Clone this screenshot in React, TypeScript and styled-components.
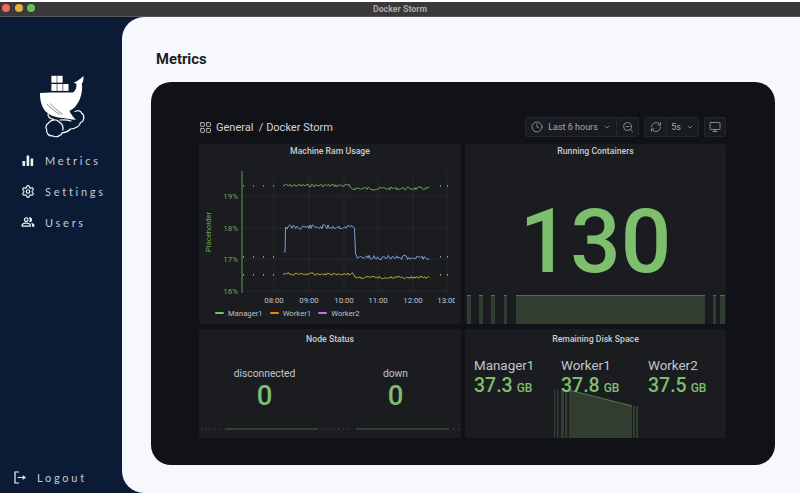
import React from 'react'
import styled, { createGlobalStyle } from 'styled-components'
import { ChevronDown, Clock, LayoutGrid, Monitor, RefreshCw, Settings, ZoomOut } from 'lucide-react'
import { MdOutlinePeopleAlt } from 'react-icons/md'

const GREEN = '#7dbf6d'
const AXIS_GREEN = '#6aa860'

const GlobalStyle = createGlobalStyle`
  html, body {
    margin: 0;
    padding: 0;
    background: #fff;
    overflow: hidden;
    font-family: Roboto, "Liberation Sans", sans-serif;
  }
`

const Window = styled.div`
  width: 800px;
  height: 491px;
  margin-top: 2px;
  display: flex;
  flex-direction: column;
  background: #0b1b35;
  overflow: hidden;
`

const TitleBar = styled.div`
  height: 14px;
  flex: none;
  position: relative;
  display: flex;
  align-items: center;
  justify-content: center;
  background: #3a3839;
  border-bottom: 1px solid #55575a;
  color: #a9a9a9;
  font-size: 8.8px;
  font-weight: 700;
`

const Lights = styled.div`
  position: absolute;
  left: 2px;
  top: 2px;
  display: flex;
  gap: 4.5px;
`

const Light = styled.span<{ $color: string }>`
  width: 8px;
  height: 8px;
  border-radius: 50%;
  background: ${p => p.$color};
`

const Body = styled.div`
  flex: 1;
  display: flex;
  min-height: 0;
`

const Sidebar = styled.nav`
  width: 122px;
  flex: none;
  display: flex;
  flex-direction: column;
  padding: 53px 0 8px 0;
  box-sizing: border-box;
`

const LogoWrap = styled.div`
  height: 70px;
  padding-left: 30px;
  margin-bottom: 12px;
  svg {
    display: block;
  }
`

const NavList = styled.div`
  display: flex;
  flex-direction: column;
  gap: 15px;
  flex: 1;
`

const NavItem = styled.a<{ $offset?: number }>`
  height: 16px;
  display: flex;
  align-items: center;
  gap: 10px;
  padding-left: ${p => p.$offset ?? 21}px;
  color: #c6cad3;
  font-family: Lato, "Noto Sans", sans-serif;
  font-size: 11px;
  letter-spacing: 2.75px;
  white-space: nowrap;
`

const NavIcon = styled.span`
  width: 14px;
  height: 14px;
  display: flex;
  align-items: center;
  justify-content: center;
  color: #f2f3f6;
`

const Main = styled.main`
  flex: 1;
  background: #f6f8fd;
  border-radius: 22px 0 0 22px;
  padding: 34px 25px 0 29px;
  min-width: 0;
`

const Heading = styled.h1`
  margin: 0 0 14px 5px;
  height: 17px;
  line-height: 17px;
  color: #1c1e22;
  font-size: 14.8px;
  font-weight: 700;
`

const Board = styled.section`
  height: 383px;
  box-sizing: border-box;
  background: #111217;
  border-radius: 20px;
  padding: 35px 49px 0 48px;
`

const BoardHeader = styled.header`
  height: 20px;
  display: flex;
  align-items: center;
  margin-bottom: 7px;
`

const Crumb = styled.div`
  flex: 1;
  display: flex;
  align-items: center;
  gap: 4px;
  color: #d3d5da;
  font-size: 11px;
`

const ToolGroup = styled.div`
  display: flex;
  margin-left: 5px;
  height: 20px;
  background: #181b1f;
  border: 1px solid #23262b;
  box-sizing: border-box;
  border-radius: 2px;
`

const ToolButton = styled.div<{ $width: number; $divider?: boolean }>`
  width: ${p => p.$width}px;
  box-sizing: border-box;
  display: flex;
  align-items: center;
  justify-content: center;
  gap: 5px;
  color: #a5a8ae;
  font-size: 9px;
  border-left: ${p => (p.$divider ? '1px solid #24272c' : 'none')};
`

const Grid = styled.div`
  display: grid;
  grid-template-columns: 262px 261px;
  grid-template-rows: 180px 109px;
  gap: 5px 4px;
`

const Panel = styled.article`
  position: relative;
  display: flex;
  flex-direction: column;
  background: #1a1c20;
  border-radius: 2px;
  overflow: hidden;
`

const PanelTitle = styled.h2<{ $lowered?: boolean }>`
  margin: ${p => (p.$lowered ? '3px' : '0')} 0 0;
  height: 14px;
  line-height: 14px;
  flex: none;
  text-align: center;
  color: #c9cbd0;
  font-size: 8.7px;
  font-weight: 500;
`

const ChartSvg = styled.svg`
  display: block;
  flex: none;
`

const Legend = styled.div`
  display: flex;
  align-items: center;
  padding-left: 16px;
  height: 14px;
  gap: 7px;
`

const LegendItem = styled.span<{ $color: string }>`
  display: flex;
  align-items: center;
  gap: 4px;
  color: #bfc1c6;
  font-size: 7.7px;
  &::before {
    content: '';
    width: 9px;
    height: 2px;
    border-radius: 1px;
    background: ${p => p.$color};
  }
`

const BigValue = styled.div`
  flex: 1;
  display: flex;
  align-items: center;
  justify-content: center;
  color: ${GREEN};
  font-size: 89px;
  line-height: 1;
  padding-top: 29px;
  font-weight: 500;
`

const StatusRow = styled.div`
  flex: 1;
  display: grid;
  grid-template-columns: 131px 131px;
  padding-top: 21px;
`

const StatusCell = styled.div`
  display: flex;
  flex-direction: column;
  align-items: center;
`

const StatusLabel = styled.span`
  color: #c3c5ca;
  font-size: 10.3px;
  line-height: 14px;
`

const StatusValue = styled.span`
  color: ${GREEN};
  font-size: 27.5px;
  font-weight: 500;
  line-height: 30px;
`

const DiskRow = styled.div`
  position: relative;
  z-index: 1;
  display: grid;
  grid-template-columns: repeat(3, 87px);
  padding: 11px 0 0 9px;
`

const DiskCell = styled.div`
  display: flex;
  flex-direction: column;
`

const DiskLabel = styled.span`
  color: #c3c5ca;
  font-size: 13.4px;
  line-height: 18px;
`

const DiskValue = styled.span`
  color: ${GREEN};
  font-size: 19.5px;
  font-weight: 500;
  line-height: 22px;
  white-space: nowrap;
`

const DiskUnit = styled.small`
  font-size: 12px;
  margin-left: 4px;
`

const DiskSpark = styled.svg`
  position: absolute;
  left: 0;
  top: 0;
`

// seeded noise so the lines stay the same on every load
function jagged(seed: number, from: number, to: number, level: (x: number) => number, amp: number) {
  let s = seed
  const pts: string[] = []
  for (let x = from; x <= to; x += 1.2) {
    s = (s * 9301 + 49297) % 233280
    const n = s / 233280 - 0.5
    pts.push(`${x.toFixed(1)},${(level(x) + n * amp).toFixed(1)}`)
  }
  return pts.join(' ')
}

const greenLine = jagged(7, 84, 231, x => (x < 150 ? 41.5 : 44.5), 3.2)
const blueHigh = jagged(11, 87, 155, () => 83, 5)
const blueLow = jagged(23, 157, 231, x => (x < 162 ? 112 : 113.5), 4.6)
const yellowLine = jagged(31, 84, 231, x => (x < 155 ? 130 : 133.5), 2.4)

function Dots({ y, color }: { y: number; color: string }) {
  return (
    <g fill={color}>
      {[44, 54, 64, 74, 241, 248].map(x => (
        <rect key={x} x={x} y={y} width="1" height="1.6" />
      ))}
    </g>
  )
}

function RamChart() {
  const ticks = [
    { label: '19%', y: 52 },
    { label: '18%', y: 84 },
    { label: '17%', y: 115 },
    { label: '16%', y: 147 }
  ]
  const times = [
    { label: '08:00', x: 75 },
    { label: '09:00', x: 110 },
    { label: '10:00', x: 145 },
    { label: '11:00', x: 179 },
    { label: '12:00', x: 214 },
    { label: '13:00', x: 248 }
  ]
  return (
    <ChartSvg width="256" height="148" viewBox="0 14 256 148" fontFamily="Roboto, sans-serif">
      {ticks.map(t => (
        <g key={t.label}>
          <line x1="43" x2="251" y1={t.y} y2={t.y} stroke="#2a2c30" strokeWidth="0.7" />
          <text x="39" y={t.y + 3} textAnchor="end" fontSize="8" fill={AXIS_GREEN}>
            {t.label}
          </text>
        </g>
      ))}
      {times.map(t => (
        <g key={t.label}>
          <line x1={t.x} x2={t.x} y1="27" y2="149" stroke="#2a2c30" strokeWidth="0.7" />
          <text x={t.x} y="159" textAnchor="middle" fontSize="7.8" fill="#c3c5ca">
            {t.label}
          </text>
        </g>
      ))}
      <line x1="43" x2="43" y1="27" y2="149" stroke={AXIS_GREEN} strokeWidth="0.9" />
      <text transform="translate(12 88) rotate(-90)" textAnchor="middle" fontSize="7.6" fill={AXIS_GREEN}>
        Placeholder
      </text>
      <Dots y={41} color="#6fa864" />
      <Dots y={112} color="#7b9fdb" />
      <Dots y={130} color="#c9a93a" />
      <polyline points={greenLine} fill="none" stroke="#6fa864" strokeWidth="1" />
      <polyline
        points={`85,108 86,108 86.6,83 ${blueHigh} 155.5,84 156.5,110 ${blueLow}`}
        fill="none"
        stroke="#7b9fdb"
        strokeWidth="1"
      />
      <polyline points={yellowLine} fill="none" stroke="#c9a93a" strokeWidth="1" />
    </ChartSvg>
  )
}

function RunningSpark() {
  const bars = [
    [2, 4],
    [14, 4],
    [26, 4],
    [39, 3],
    [51, 189],
    [248, 3],
    [255, 5]
  ]
  return (
    <ChartSvg width="261" height="29" viewBox="0 0 261 29">
      {bars.map(([x, w]) => (
        <g key={x}>
          <rect x={x} y="0" width={w} height="29" fill="#313d30" />
          <rect x={x} y="0" width={w} height="1" fill="#4d7048" />
        </g>
      ))}
    </ChartSvg>
  )
}

function NodeSpark() {
  return (
    <ChartSvg width="262" height="13" viewBox="0 0 262 13">
      <g stroke="#47693f" strokeWidth="1">
        <line x1="26" x2="119" y1="4" y2="4" />
        <line x1="157" x2="250" y1="4" y2="4" />
      </g>
      <g fill="#5a6658">
        {[2, 6, 10, 15, 20, 123, 127, 131, 135, 139, 144, 149, 254, 259].map(x => (
          <rect key={x} x={x} y="3.6" width="1.2" height="0.8" />
        ))}
      </g>
    </ChartSvg>
  )
}

function DiskChart() {
  return (
    <DiskSpark width="261" height="109" viewBox="0 0 261 109">
      <g fill="#313d30">
        <rect x="89" y="60" width="1.4" height="49" />
        <rect x="92" y="60" width="1.4" height="49" />
        <rect x="96" y="60" width="3" height="49" />
        <rect x="100" y="60" width="2.4" height="49" />
        <rect x="168" y="77" width="2" height="32" />
        <rect x="171" y="77" width="2" height="32" />
        <polygon points="104,61 167,77 167,109 104,109" />
      </g>
      <line x1="104" y1="61" x2="167" y2="77" stroke="#5b8f54" strokeWidth="0.8" />
    </DiskSpark>
  )
}

function WhaleLogo() {
  return (
    <svg width="60" height="70" viewBox="0 0 60 70">
      <g fill="#fff">
        <rect x="21.4" y="5.8" width="5.3" height="6.9" />
        <rect x="27.3" y="5.8" width="5.3" height="6.9" />
        <rect x="21.4" y="14" width="5.3" height="6.9" />
        <rect x="27.3" y="14" width="5.3" height="6.9" />
        <rect x="33.2" y="14" width="5.3" height="6.9" />
        <path d="M10 23 C20 22.4 34 22.4 43 22.6 C45.6 21 46.8 17.6 46.4 13.8 C45.2 13.5 44.4 13 44 12.2 C46.6 12 49.4 9.6 53.4 6 C53.8 10 53 12.4 51.8 13.6 C52.8 20 51.2 28 47.8 33 C46 36 43.4 39 39.4 41 C41 44 43 47 46 49.8 C41 49.6 37 48.8 33 48 C25 47.4 18 45 14 39.4 C11 35 9.8 28.6 10 23 Z" />
      </g>
      <g fill="none" stroke="#0b1b35" strokeWidth="0.5">
        <path d="M17 34 C20 37 24 41 30 44.5" />
        <path d="M20 33.5 C23 36.5 27 40.5 33 44.5" />
      </g>
      <path
        d="M18.3 53.3 C15.5 55 15.5 58 16.7 59.5 C16 63 19 66.5 22.5 65.8 C25.5 67.8 31 66.5 32.5 62.5 C36 63 39 60.5 40.5 59 C45 59 50 56 50.5 52.5 C54.5 51 55 45 51.5 43 C51 41 48 40 45 41.5 M18.3 53.3 C20 50 26 48.6 28.5 51.5 C31.5 53 33.5 56 33 60 M18 44 C18 47 20 48.6 23 49.2 M30 50 C34 49.6 38 50 41 51"
        fill="none"
        stroke="#fff"
        strokeWidth="1.2"
        strokeLinecap="round"
      />
    </svg>
  )
}

function BarsIcon() {
  return (
    <svg width="12" height="11" viewBox="0 0 12 11" fill="currentColor">
      <rect x="0.5" y="6" width="2.6" height="5" rx="0.4" />
      <rect x="4.6" y="0.5" width="2.6" height="10.5" rx="0.4" />
      <rect x="8.6" y="3.4" width="2.6" height="7.6" rx="0.4" />
    </svg>
  )
}

function LogoutIcon() {
  return (
    <svg width="12" height="13" viewBox="0 0 12 13" fill="none" stroke="currentColor" strokeWidth="1.2">
      <path d="M5 1 H1 V12 H5" />
      <path d="M3.8 6.5 H11 M8.6 4.6 L11 6.5 L8.6 8.4" />
    </svg>
  )
}

export default function App() {
  return (
    <>
      <GlobalStyle />
      <Window>
        <TitleBar>
          <Lights>
            <Light $color="#ec6a5e" />
            <Light $color="#e3b341" />
            <Light $color="#5fc454" />
          </Lights>
          Docker Storm
        </TitleBar>
        <Body>
          <Sidebar>
            <LogoWrap>
              <WhaleLogo />
            </LogoWrap>
            <NavList>
              <NavItem>
                <NavIcon>
                  <BarsIcon />
                </NavIcon>
                Metrics
              </NavItem>
              <NavItem>
                <NavIcon>
                  <Settings size={15} strokeWidth={2} />
                </NavIcon>
                Settings
              </NavItem>
              <NavItem>
                <NavIcon>
                  <MdOutlinePeopleAlt size={14} />
                </NavIcon>
                Users
              </NavItem>
            </NavList>
            <NavItem $offset={13}>
              <NavIcon>
                <LogoutIcon />
              </NavIcon>
              Logout
            </NavItem>
          </Sidebar>
          <Main>
            <Heading>Metrics</Heading>
            <Board>
              <BoardHeader>
                <Crumb>
                  <LayoutGrid size={13} strokeWidth={1.5} />
                  General&nbsp;&nbsp;/ Docker Storm
                </Crumb>
                <ToolGroup>
                  <ToolButton $width={90}>
                    <Clock size={12} strokeWidth={1.5} />
                    Last 6 hours
                    <ChevronDown size={8} />
                  </ToolButton>
                  <ToolButton $width={22} $divider>
                    <ZoomOut size={12} strokeWidth={1.5} />
                  </ToolButton>
                </ToolGroup>
                <ToolGroup>
                  <ToolButton $width={21}>
                    <RefreshCw size={12} strokeWidth={1.5} />
                  </ToolButton>
                  <ToolButton $width={32} $divider>
                    5s
                    <ChevronDown size={8} />
                  </ToolButton>
                </ToolGroup>
                <ToolGroup>
                  <ToolButton $width={20}>
                    <Monitor size={12} strokeWidth={1.5} />
                  </ToolButton>
                </ToolGroup>
              </BoardHeader>
              <Grid>
                <Panel>
                  <PanelTitle>Machine Ram Usage</PanelTitle>
                  <RamChart />
                  <Legend>
                    <LegendItem $color="#73bf69">Manager1</LegendItem>
                    <LegendItem $color="#ff780a">Worker1</LegendItem>
                    <LegendItem $color="#b877d9">Worker2</LegendItem>
                  </Legend>
                </Panel>
                <Panel>
                  <PanelTitle>Running Containers</PanelTitle>
                  <BigValue>130</BigValue>
                  <RunningSpark />
                </Panel>
                <Panel>
                  <PanelTitle $lowered>Node Status</PanelTitle>
                  <StatusRow>
                    <StatusCell>
                      <StatusLabel>disconnected</StatusLabel>
                      <StatusValue>0</StatusValue>
                    </StatusCell>
                    <StatusCell>
                      <StatusLabel>down</StatusLabel>
                      <StatusValue>0</StatusValue>
                    </StatusCell>
                  </StatusRow>
                  <NodeSpark />
                </Panel>
                <Panel>
                  <PanelTitle $lowered>Remaining Disk Space</PanelTitle>
                  <DiskChart />
                  <DiskRow>
                    <DiskCell>
                      <DiskLabel>Manager1</DiskLabel>
                      <DiskValue>
                        37.3<DiskUnit>GB</DiskUnit>
                      </DiskValue>
                    </DiskCell>
                    <DiskCell>
                      <DiskLabel>Worker1</DiskLabel>
                      <DiskValue>
                        37.8<DiskUnit>GB</DiskUnit>
                      </DiskValue>
                    </DiskCell>
                    <DiskCell>
                      <DiskLabel>Worker2</DiskLabel>
                      <DiskValue>
                        37.5<DiskUnit>GB</DiskUnit>
                      </DiskValue>
                    </DiskCell>
                  </DiskRow>
                </Panel>
              </Grid>
            </Board>
          </Main>
        </Body>
      </Window>
    </>
  )
}
